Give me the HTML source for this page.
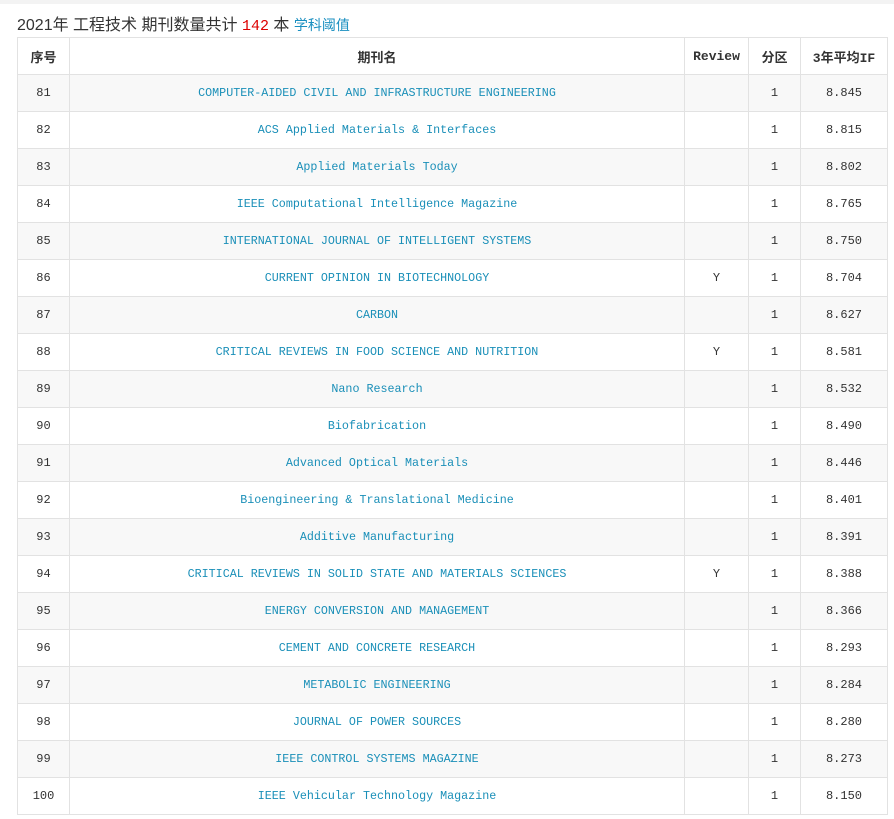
<!DOCTYPE html>
<html><head><meta charset="utf-8"><style>
body{margin:0;background:#fff;width:894px;height:819px;overflow:hidden;font-family:"Liberation Sans","Noto Sans CJK SC",sans-serif;}
.top{height:4px;background:#f3f3f3;}
.title{position:absolute;left:17px;top:11px;font-size:16px;color:#333;white-space:nowrap;}
.title .r{color:#d00;font-family:"Liberation Mono",monospace;font-size:15px;}
.title .l{color:#1a8fc0;font-size:14px;}
table{position:absolute;left:17px;top:37px;border-collapse:collapse;width:870px;table-layout:fixed;}
td,th{border:1px solid #e2e2e2;height:36px;padding:0;text-align:center;font-family:"Liberation Mono","Noto Sans CJK SC",monospace;font-size:12px;color:#333;}
th{font-weight:bold;font-size:13px;color:#333;}
tr:nth-child(even) td{background:#f8f8f8;}
td.n{color:#1a8fb8;font-size:11.7px;}
</style></head><body>
<div class="top"></div>
<div class="title">2021年 工程技术 期刊数量共计 <span class="r">142</span> 本 <span class="l">学科阈值</span></div>
<table>
<colgroup><col style="width:52px"><col style="width:615px"><col style="width:64px"><col style="width:52px"><col style="width:87px"></colgroup>
<tr><th>序号</th><th>期刊名</th><th>Review</th><th>分区</th><th>3年平均IF</th></tr>
<tr><td>81</td><td class="n">COMPUTER-AIDED CIVIL AND INFRASTRUCTURE ENGINEERING</td><td></td><td>1</td><td>8.845</td></tr>
<tr><td>82</td><td class="n">ACS Applied Materials &amp; Interfaces</td><td></td><td>1</td><td>8.815</td></tr>
<tr><td>83</td><td class="n">Applied Materials Today</td><td></td><td>1</td><td>8.802</td></tr>
<tr><td>84</td><td class="n">IEEE Computational Intelligence Magazine</td><td></td><td>1</td><td>8.765</td></tr>
<tr><td>85</td><td class="n">INTERNATIONAL JOURNAL OF INTELLIGENT SYSTEMS</td><td></td><td>1</td><td>8.750</td></tr>
<tr><td>86</td><td class="n">CURRENT OPINION IN BIOTECHNOLOGY</td><td>Y</td><td>1</td><td>8.704</td></tr>
<tr><td>87</td><td class="n">CARBON</td><td></td><td>1</td><td>8.627</td></tr>
<tr><td>88</td><td class="n">CRITICAL REVIEWS IN FOOD SCIENCE AND NUTRITION</td><td>Y</td><td>1</td><td>8.581</td></tr>
<tr><td>89</td><td class="n">Nano Research</td><td></td><td>1</td><td>8.532</td></tr>
<tr><td>90</td><td class="n">Biofabrication</td><td></td><td>1</td><td>8.490</td></tr>
<tr><td>91</td><td class="n">Advanced Optical Materials</td><td></td><td>1</td><td>8.446</td></tr>
<tr><td>92</td><td class="n">Bioengineering &amp; Translational Medicine</td><td></td><td>1</td><td>8.401</td></tr>
<tr><td>93</td><td class="n">Additive Manufacturing</td><td></td><td>1</td><td>8.391</td></tr>
<tr><td>94</td><td class="n">CRITICAL REVIEWS IN SOLID STATE AND MATERIALS SCIENCES</td><td>Y</td><td>1</td><td>8.388</td></tr>
<tr><td>95</td><td class="n">ENERGY CONVERSION AND MANAGEMENT</td><td></td><td>1</td><td>8.366</td></tr>
<tr><td>96</td><td class="n">CEMENT AND CONCRETE RESEARCH</td><td></td><td>1</td><td>8.293</td></tr>
<tr><td>97</td><td class="n">METABOLIC ENGINEERING</td><td></td><td>1</td><td>8.284</td></tr>
<tr><td>98</td><td class="n">JOURNAL OF POWER SOURCES</td><td></td><td>1</td><td>8.280</td></tr>
<tr><td>99</td><td class="n">IEEE CONTROL SYSTEMS MAGAZINE</td><td></td><td>1</td><td>8.273</td></tr>
<tr><td>100</td><td class="n">IEEE Vehicular Technology Magazine</td><td></td><td>1</td><td>8.150</td></tr>
</table>
</body></html>
